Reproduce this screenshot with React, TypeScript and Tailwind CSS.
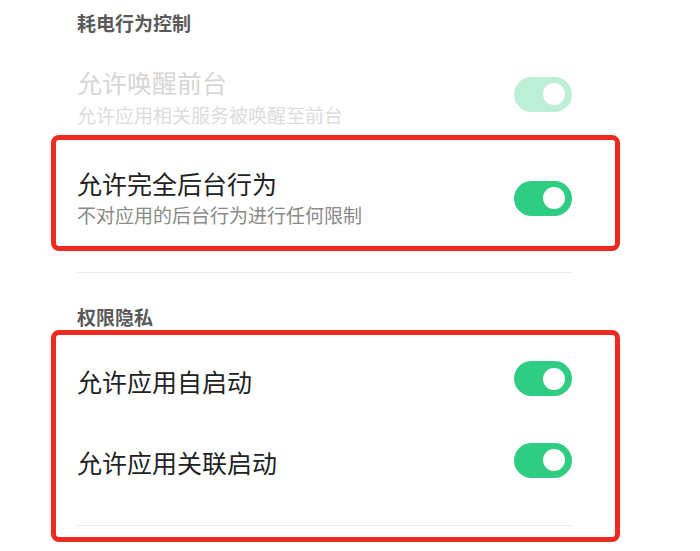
import React from "react";

function Toggle({ faded = false }: { faded?: boolean }) {
  return (
    <div
      className={`flex h-[35px] w-[58px] shrink-0 items-center justify-end rounded-full pr-[7px] ${
        faded ? "bg-[#bdefd7]" : "bg-[#2fcd84]"
      }`}
    >
      <div className="h-[22px] w-[22px] rounded-full bg-white" />
    </div>
  );
}

export default function App() {
  return (
    <div
      className="h-[551px] w-[700px] overflow-hidden bg-white"
      style={{ fontFamily: '"Noto Sans CJK SC", "Noto Sans", sans-serif' }}
    >
      {/* Section header 1 */}
      <div className="pl-[77px] pt-[10px] text-[19px] font-bold leading-[26px] text-[#5a5a5a]">
        耗电行为控制
      </div>

      {/* Faded row */}
      <div className="mt-[31px] flex items-center justify-between pl-[77px] pr-[128px]">
        <div className="flex flex-col gap-[5px]">
          <div className="text-[25px] leading-[30px] text-[#d6d6d6]">允许唤醒前台</div>
          <div className="text-[19px] leading-[26px] text-[#dcdcdc]">
            允许应用相关服务被唤醒至前台
          </div>
        </div>
        <div className="-mt-[7px]">
          <Toggle faded />
        </div>
      </div>

      {/* Box 1 */}
      <div className="ml-[51px] mt-[7px] w-[569px] rounded-[8px] border-[5px] border-[#ec2a20] pb-[18px] pl-[21px] pr-[43px] pt-[28px]">
        <div className="flex items-center justify-between">
          <div className="flex flex-col gap-[4px]">
            <div className="text-[25px] leading-[30px] text-[#222222]">允许完全后台行为</div>
            <div className="text-[19px] leading-[26px] text-[#8a8a8a]">
              不对应用的后台行为进行任何限制
            </div>
          </div>
          <Toggle />
        </div>
      </div>

      {/* Divider */}
      <div className="ml-[77px] mt-[21px] h-px w-[495px] bg-[#ececec]" />

      {/* Section header 2 */}
      <div className="mt-[31px] pl-[77px] text-[19px] font-bold leading-[26px] text-[#5a5a5a]">
        权限隐私
      </div>

      {/* Box 2 */}
      <div className="ml-[51px] w-[569px] rounded-[8px] border-[5px] border-[#ec2a20] pb-[11px] pl-[21px] pr-[43px] pt-[19px]">
        <div className="flex h-[54px] items-center justify-between">
          <div className="text-[25px] leading-[30px] text-[#222222]">允许应用自启动</div>
          <div className="-mt-[5px]">
            <Toggle />
          </div>
        </div>
        <div className="mt-[27px] flex h-[54px] items-center justify-between">
          <div className="text-[25px] leading-[30px] text-[#222222]">允许应用关联启动</div>
          <div className="-mt-[4px]">
            <Toggle />
          </div>
        </div>
        <div className="mt-[36px] h-px w-[495px] bg-[#ececec]" />
      </div>
    </div>
  );
}
